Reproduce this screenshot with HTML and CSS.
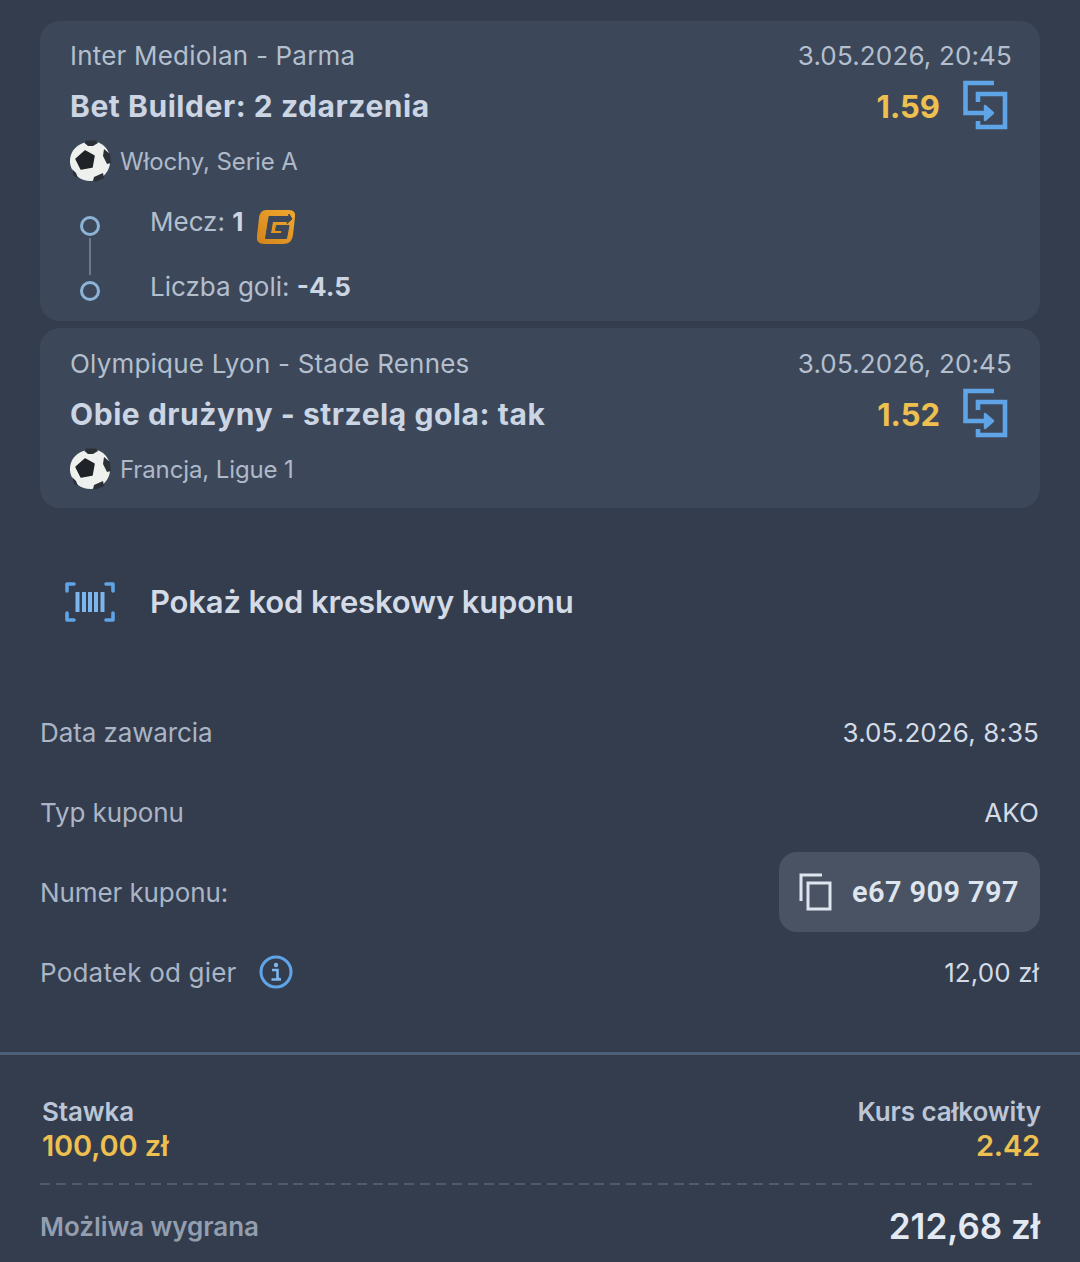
FILE: index.html
```html
<!DOCTYPE html>
<html lang="pl">
<head>
<meta charset="utf-8">
<title>Kupon</title>
<link rel="stylesheet" href="styles.css">
</head>
<body>
<main class="page">
  <section class="cards">
    <article class="card">
      <div class="row head"><span>Inter Mediolan - Parma</span><span class="date">3.05.2026, 20:45</span></div>
      <div class="row pick">
        <span class="title">Bet Builder: 2 zdarzenia</span>
        <span class="odds-wrap"><span class="odds">1.59</span>
          <svg class="swap" viewBox="0 0 50 50"><use href="#i-swap"/></svg></span>
      </div>
      <div class="league"><svg class="ball" viewBox="0 0 42 42"><use href="#i-ball"/></svg><span>Włochy, Serie A</span></div>
      <div class="timeline">
        <div class="sel first"><span class="dot"></span><span>Mecz: <b>1</b></span>
          <svg class="gicon" viewBox="0 0 40 36"><use href="#i-g"/></svg></div>
        <div class="sel last"><span class="dot"></span><span>Liczba goli: <b>-4.5</b></span></div>
      </div>
    </article>
    <article class="card">
      <div class="row head"><span>Olympique Lyon - Stade Rennes</span><span class="date">3.05.2026, 20:45</span></div>
      <div class="row pick">
        <span class="title">Obie drużyny - strzelą gola: tak</span>
        <span class="odds-wrap"><span class="odds">1.52</span>
          <svg class="swap" viewBox="0 0 50 50"><use href="#i-swap"/></svg></span>
      </div>
      <div class="league"><svg class="ball" viewBox="0 0 42 42"><use href="#i-ball"/></svg><span>Francja, Ligue 1</span></div>
    </article>
  </section>

  <div class="barcode">
    <svg class="barcode-icon" viewBox="0 0 50 40" fill="none" stroke="#5fa4e6" stroke-width="3.6" stroke-linecap="round" stroke-linejoin="round">
      <path d="M9 2H2V9M41 2H48V9M2 31V38H9M48 31V38H41"/>
      <path d="M12.5 10V30M19 10V30M25 10V30M31 10V30M37.5 10V30" stroke-linecap="butt" stroke="#7db6ec" stroke-width="4"/>
    </svg>
    <span class="barcode-text">Pokaż kod kreskowy kuponu</span>
  </div>

  <section class="info">
    <div class="info-row"><span class="label">Data zawarcia</span><span class="value">3.05.2026, 8:35</span></div>
    <div class="info-row"><span class="label">Typ kuponu</span><span class="value">AKO</span></div>
    <div class="info-row"><span class="label">Numer kuponu:</span>
      <span class="pill">
        <svg class="copy" viewBox="0 0 34 38" fill="none" stroke="#dfe5ee" stroke-width="3"><path d="M24 2H3V28"/><rect x="10" y="10" width="22" height="26"/></svg>
        <span class="code">e67 909 797</span>
      </span>
    </div>
    <div class="info-row"><span class="label tax">Podatek od gier
      <svg class="info-icon" viewBox="0 0 34 34"><circle cx="17" cy="17" r="15" fill="none" stroke="#5fa4e6" stroke-width="3"/><circle cx="17" cy="10" r="2.2" fill="#7db6ec"/><path d="M13 15H18.5V24H21.5M12.5 24.5H22" fill="none" stroke="#7db6ec" stroke-width="2.6"/></svg></span>
      <span class="value">12,00 zł</span></div>
  </section>

  <section class="summary">
    <div class="totals">
      <div class="col"><span class="cap">Stawka</span><span class="gold">100,00 zł</span></div>
      <div class="col right"><span class="cap">Kurs całkowity</span><span class="gold">2.42</span></div>
    </div>
    <div class="dash"></div>
    <div class="win"><span class="win-label">Możliwa wygrana</span><span class="win-value">212,68 zł</span></div>
  </section>
</main>

<svg class="defs" width="0" height="0" aria-hidden="true">
  <defs>
    <linearGradient id="g-orange" x1="0" y1="1" x2="1" y2="0">
      <stop offset="0" stop-color="#d2841b"/>
      <stop offset="1" stop-color="#f2a92e"/>
    </linearGradient>
    <g id="i-swap" fill="none" stroke="#5fa4e6" stroke-width="4.6">
      <path d="M34 3H5.5V33H26"/>
      <path d="M18 22V14H45V47H18V41"/>
      <path d="M25 26L33 33L25 40Z" fill="#5fa4e6" stroke-linejoin="round" stroke-width="2.4"/>
    </g>
    <g id="i-ball">
      <path d="M21 1.5C26 0.5 33 3 37 8C41 13 42 20 40.5 26C39 32 34 38 28 40C22 42 14 41 9 37C4 33 0.5 26 1 20C1.5 13 5 8 10 5C13 3 17 2 21 1.5Z" fill="#eef0ee"/>
      <path d="M16 11L25 16L23 27L12 29L7 19Z" fill="#1f2226" stroke="#1f2226" stroke-width="1.5" stroke-linejoin="round"/>
      <path d="M17 0.5L27 0.5L29 3L24 6H19L15.5 3ZM35 9L41 14L42 23L38 24L34 16ZM25 37L34 33L35 38L27 41.5L24 41ZM3 29L7 33L9 38L5 36Z" fill="#2b3036"/>
    </g>
    <g id="i-g">
      <path d="M10 1H33Q40 1 39 8L37 26Q36 35 27 35H8Q0 35 1 27L3 9Q4 1 10 1Z" fill="url(#g-orange)"/>
      <path d="M13 7.5H32.5L33 5L36 10L31 14.5L31.5 12.5H16.5L14.5 24.5H25.5L26 21.5H19.5L20.5 16.5H33L30.5 29.5H9.5Z" fill="#3c4859" stroke="#3c4859" stroke-linejoin="round"/>
    </g>
  </defs>
</svg>
</body>
</html>
```

FILE: styles.css
```css
* { box-sizing: border-box; }
html, body { margin: 0; padding: 0; }
body {
  width: 1080px;
  height: 1262px;
  overflow: hidden;
  background: #343d4e;
  font-family: "Inter", "Liberation Sans", sans-serif;
  color: #b9c3d2;
}
.page { display: flex; flex-direction: column; }
.defs { position: absolute; }

.cards { display: flex; flex-direction: column; gap: 7px; padding: 21px 40px 0; }
.card { background: #3c4859; border-radius: 20px; padding: 15px 29px 0 30px; }
.card:first-child { height: 300px; padding-top: 14px; }
.card:last-child { height: 180px; }
.row { display: flex; justify-content: space-between; align-items: center; }
.head { height: 40px; font-size: 26px; letter-spacing: 0.2px; color: #b4bfce; }
.date { margin-right: -1px; letter-spacing: 0.15px; }
.pick { height: 60px; }
.title { margin-top: 2px; font-size: 30px; font-weight: 700; letter-spacing: 0.55px; color: #ccd5e3; }
.odds-wrap { display: flex; align-items: center; gap: 20px; }
.odds { margin-top: 3px; font-size: 31px; font-weight: 700; color: #eec04f; }
.swap { width: 50px; height: 50px; margin-right: 1px; display: block; }

.league { display: flex; align-items: center; gap: 9px; height: 44px; margin-top: 4px; font-size: 24px; letter-spacing: -0.12px; color: #aeb9c9; }
.ball { width: 42px; height: 42px; margin-left: -1px; display: block; }

.timeline { display: flex; flex-direction: column; padding-top: 6px; }
.sel { position: relative; display: flex; align-items: center; height: 65px; padding-left: 80px; font-size: 26px; color: #b4bfce; }
.sel b { font-weight: 700; color: #ccd5e3; }
.dot { position: absolute; left: 10px; top: 27px; width: 20px; height: 20px; border: 3px solid #8db4d8; border-radius: 50%; }
.first::after { content: ""; position: absolute; left: 19px; top: 49px; width: 2px; height: 37px; background: #6a7b90; }
.gicon { width: 40px; height: 36px; margin-left: 12px; margin-top: 10px; }

.barcode { display: flex; align-items: center; gap: 35px; height: 40px; margin-top: 74px; padding-left: 65px; font-size: 31px; font-weight: 600; letter-spacing: -0.15px; color: #d3dbe7; }
.barcode-text { margin-bottom: 2px; }
.barcode-icon { width: 50px; height: 40px; display: block; }

.info { display: flex; flex-direction: column; padding: 70px 40px 0; }
.info-row { display: flex; justify-content: space-between; align-items: center; height: 80px; font-size: 26px; }
.label { letter-spacing: -0.1px; color: #aab5c5; }
.value { margin-right: 1px; letter-spacing: 0.1px; color: #d3dbe7; }
.tax { display: flex; align-items: center; gap: 22px; letter-spacing: 0.2px; }
.info-icon { width: 34px; height: 34px; display: block; }
.pill { display: flex; align-items: center; gap: 20px; width: 261px; height: 80px; padding-left: 19px; border-radius: 18px; background: #4a5364; }
.copy { width: 34px; height: 38px; display: block; }
.code { font-family: "Roboto", sans-serif; font-size: 29px; font-weight: 600; letter-spacing: 0.4px; color: #dfe5ee; }

.summary { margin-top: 40px; border-top: 3px solid #4e6079; padding: 41px 40px 0; }
.totals { display: flex; justify-content: space-between; align-items: flex-start; height: 87px; padding-left: 2px; }
.col { display: flex; flex-direction: column; }
.right { align-items: flex-end; }
.cap { font-size: 26px; line-height: 32px; font-weight: 600; letter-spacing: -0.1px; color: #bcc6d6; }
.right .cap { margin-right: -1px; }
.gold { font-size: 29px; line-height: 36px; font-weight: 600; letter-spacing: -0.15px; color: #eec04f; }
.dash { height: 2px; margin-right: 8px; background: repeating-linear-gradient(90deg, #4f5a6b 0 10px, transparent 10px 15.84px); }
.win { display: flex; justify-content: space-between; align-items: center; height: 82px; }
.win-label { font-size: 26px; font-weight: 600; letter-spacing: -0.05px; color: #939eae; }
.win-value { font-size: 35px; font-weight: 600; color: #e3e9f2; }
```
